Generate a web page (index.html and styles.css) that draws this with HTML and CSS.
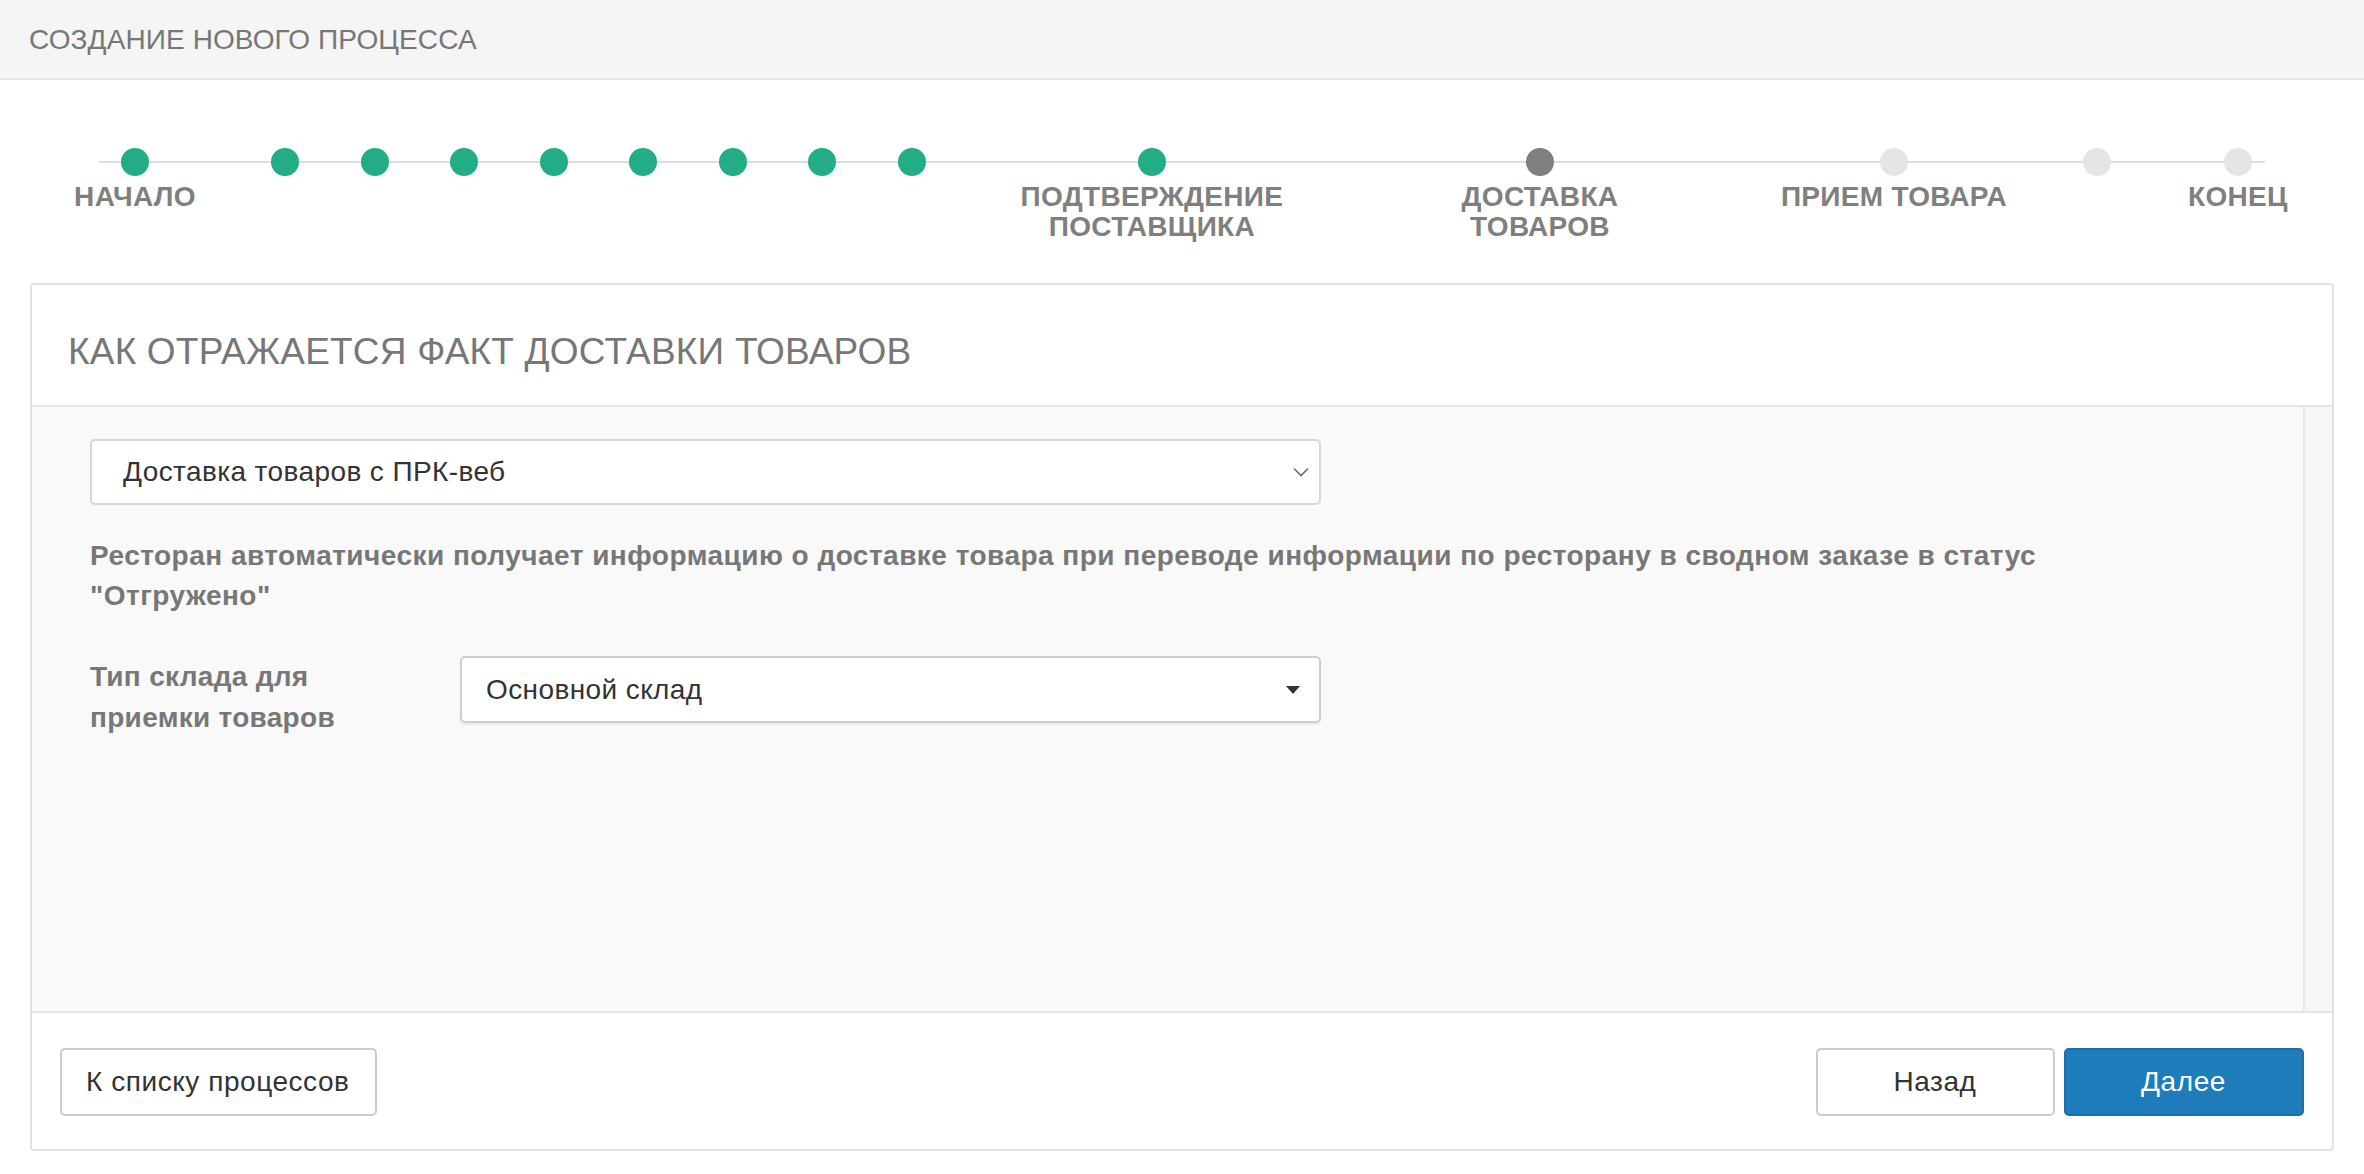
FILE: index.html
```html
<!DOCTYPE html>
<html lang="ru">
<head>
<meta charset="utf-8">
<title>Создание нового процесса</title>
<link rel="stylesheet" href="styles.css">
</head>
<body>
<header class="topbar">
  <h1 class="topbar-title">СОЗДАНИЕ НОВОГО ПРОЦЕССА</h1>
</header>

<div class="stepper">
  <div class="step done"><span class="dot"></span><span class="label">НАЧАЛО</span></div>
  <div class="step done"><span class="dot"></span></div>
  <div class="step done"><span class="dot"></span></div>
  <div class="step done"><span class="dot"></span></div>
  <div class="step done"><span class="dot"></span></div>
  <div class="step done"><span class="dot"></span></div>
  <div class="step done"><span class="dot"></span></div>
  <div class="step done"><span class="dot"></span></div>
  <div class="step done"><span class="dot"></span></div>
  <div class="step done"><span class="dot"></span><span class="label">ПОДТВЕРЖДЕНИЕ ПОСТАВЩИКА</span></div>
  <div class="step current"><span class="dot"></span><span class="label">ДОСТАВКА ТОВАРОВ</span></div>
  <div class="step todo"><span class="dot"></span><span class="label">ПРИЕМ ТОВАРА</span></div>
  <div class="step todo"><span class="dot"></span></div>
  <div class="step todo"><span class="dot"></span><span class="label">КОНЕЦ</span></div>
</div>

<section class="card">
  <div class="card-header">КАК ОТРАЖАЕТСЯ ФАКТ ДОСТАВКИ ТОВАРОВ</div>
  <div class="card-body">
    <div class="card-content">
      <div class="select select-main">
        <span>Доставка товаров с ПРК-веб</span>
        <svg class="chevron" width="16" height="10" viewBox="0 0 16 10"><polyline points="1,1.5 8,8.5 15,1.5" fill="none" stroke="#6b6b6b" stroke-width="1.6"/></svg>
      </div>
      <p class="description">Ресторан автоматически получает информацию о доставке товара при переводе информации по ресторану в сводном заказе в статус "Отгружено"</p>
      <div class="form-row">
        <div class="form-label">Тип склада для приемки товаров</div>
        <div class="select select-field">
          <span>Основной склад</span>
          <svg class="caret" width="14" height="8" viewBox="0 0 14 8"><polygon points="0,0 14,0 7,8" fill="#333"/></svg>
        </div>
      </div>
    </div>
    <div class="scroll-track"></div>
  </div>
  <div class="card-footer">
    <button class="btn">К списку процессов</button>
    <div class="btn-group">
      <button class="btn btn-back">Назад</button>
      <button class="btn btn-primary">Далее</button>
    </div>
  </div>
</section>
</body>
</html>
```

FILE: styles.css
```css
* { box-sizing: border-box; }

body {
  margin: 0;
  background: #ffffff;
  font-family: "Liberation Sans", Arial, "Helvetica Neue", sans-serif;
  color: #333;
}

.topbar {
  height: 80px;
  background: #f5f5f5;
  border-bottom: 2px solid #e7e7e7;
  padding: 24px 29px 0;
}

.topbar-title {
  margin: 0;
  font-size: 28px;
  line-height: 32px;
  font-weight: normal;
  letter-spacing: 0.1px;
  color: #777;
}

/* stepper */
.stepper {
  position: relative;
  margin: 68px 0 0 121px;
  display: grid;
  grid-template-columns: 150px repeat(7, 89.57px) 240px 388px 354px 203px 141px 28px;
}

.stepper::before {
  content: "";
  position: absolute;
  left: -22px;
  top: 13px;
  width: 2166px;
  height: 2px;
  background: #dcdcdc;
}

.step {
  position: relative;
  width: 28px;
  display: flex;
  flex-direction: column;
}

.dot {
  width: 28px;
  height: 28px;
  border-radius: 50%;
  background: #e5e5e5;
}

.step.done .dot { background: #23ad87; }
.step.current .dot { background: #7f7f7f; }
.step.todo .dot { background: #e5e5e5; }

.label {
  width: 300px;
  margin: 6px 0 0 -136px;
  text-align: center;
  font-size: 28px;
  line-height: 30px;
  font-weight: bold;
  letter-spacing: 0.3px;
  color: #7f7f7f;
  min-height: 60px;
}

/* card */
.card {
  margin: 41px 30px 0;
  border: 2px solid #e2e2e2;
  border-radius: 4px;
  background: #fff;
}

.card-header {
  padding: 47px 36px 33px;
  font-size: 37px;
  line-height: 40px;
  letter-spacing: 0.2px;
  color: #777;
  border-bottom: 2px solid #e4e4e4;
}

.card-body {
  display: flex;
  height: 606px;
  background: #f9f9f9;
  border-bottom: 2px solid #e4e4e4;
}

.card-content {
  flex: 1;
  padding: 32px 60px 0 58px;
}

.scroll-track {
  flex: none;
  width: 29px;
  border-left: 2px solid #e8e8e8;
  background: #f6f6f6;
}

.select {
  display: flex;
  align-items: center;
  justify-content: space-between;
  background: #fff;
  font-size: 28px;
  letter-spacing: 0.4px;
  color: #333;
}

.select-main {
  width: 1231px;
  height: 66px;
  border: 2px solid #d0d9e3;
  border-radius: 5px;
  padding: 0 10px 0 31px;
}

.description {
  margin: 31px 0 0;
  max-width: 2070px;
  font-size: 28px;
  line-height: 40px;
  font-weight: bold;
  letter-spacing: 0.48px;
  color: #777;
}

.form-row {
  display: flex;
  align-items: flex-start;
  margin-top: 40px;
}

.form-label {
  flex: none;
  width: 370px;
  padding-right: 60px;
  font-size: 28px;
  line-height: 41px;
  font-weight: bold;
  letter-spacing: 0.3px;
  color: #777;
}

.select-field {
  width: 861px;
  height: 67px;
  border: 2px solid #cfcfcf;
  border-radius: 5px;
  box-shadow: 0 2px 2px rgba(0, 0, 0, 0.06);
  padding: 0 19px 0 24px;
}

/* footer */
.card-footer {
  display: flex;
  justify-content: space-between;
  align-items: center;
  padding: 35px 28px 33px;
}

.btn-group {
  display: flex;
  gap: 9px;
}

.btn {
  height: 68px;
  padding: 0 25px 0 24px;
  border: 2px solid #cccccc;
  border-radius: 5px;
  background: #fff;
  font-family: inherit;
  font-size: 28px;
  letter-spacing: 0.55px;
  color: #333;
}

.btn-back { width: 239px; }

.btn-primary {
  width: 240px;
  background: #1f7cba;
  border-color: #1b6ea6;
  color: #fff;
}
```
